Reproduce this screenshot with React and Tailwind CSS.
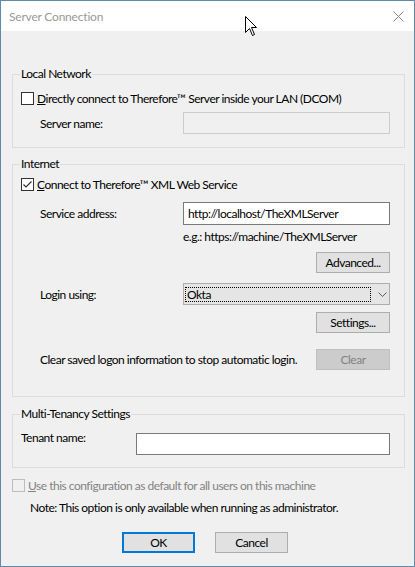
import React from 'react';

const font = { fontFamily: 'Lato, "Liberation Sans", Arial, sans-serif' };

function CheckBox({ checked, disabled }) {
  return (
    <span
      className={`flex h-[13px] w-[13px] shrink-0 items-center justify-center border ${
        disabled ? 'border-[#bcbcbc] bg-[#f0f0f0]' : 'border-[#333333] bg-white'
      }`}
    >
      {checked && (
        <svg width="11" height="11" viewBox="0 0 11 11">
          <polyline points="1.5,5.5 4,8 9.5,2.5" fill="none" stroke="#333333" strokeWidth="1.2" />
        </svg>
      )}
    </span>
  );
}

function Button({ children, disabled, className = '' }) {
  return (
    <div
      className={`flex h-[21px] w-[74px] items-center justify-center border ${
        disabled
          ? 'border-[#bfbfbf] bg-[#cccccc] text-[#838383]'
          : 'border-[#adadad] bg-[#e1e1e1] text-black'
      } ${className}`}
    >
      {children}
    </div>
  );
}

function GroupBox({ title, className = '', children }) {
  return (
    <fieldset className={`ml-[11px] w-[393px] border border-[#dcdcdc] ${className}`}>
      <legend className="ml-[7px] px-[1px] text-[12px] leading-[14px]">{title}</legend>
      {children}
    </fieldset>
  );
}

export default function App() {
  return (
    <div
      className="relative flex h-[567px] w-[415px] flex-col border border-[#6089a8] text-[12px] leading-[15px] tracking-[-0.5px] text-black"
      style={font}
    >
      {/* title bar */}
      <div className="flex h-[30px] items-center justify-between bg-white pl-[8px] pr-[10px]">
        <span className="text-[12px] tracking-[-0.2px] text-[#999999]">Server Connection</span>
        <svg width="11" height="11" viewBox="0 0 11 11">
          <path d="M0.5 0.5 L10.5 10.5 M10.5 0.5 L0.5 10.5" stroke="#8a8a8a" strokeWidth="1" />
        </svg>
      </div>

      <div className="flex flex-1 flex-col whitespace-nowrap bg-[#f0f0f0]">
        <GroupBox title="Local Network" className="mt-[36px] pb-[13px]">
          <div className="mt-[11px] flex h-[13px] items-center pl-[8px]">
            <CheckBox />
            <span className="ml-[3px]">
              <span className="underline">D</span>irectly connect to Therefore™ Server inside your LAN (DCOM)
            </span>
          </div>
          <div className="mt-[7px] flex items-center pl-[27px] pr-[14px]">
            <span className="w-[143px]">Server name:</span>
            <div className="h-[22px] w-[207px] border border-[#cccccc] bg-[#f0f0f0]" />
          </div>
        </GroupBox>

        <GroupBox title="Internet" className="mt-[9px] pb-[26px]">
          <div className="mt-[7px] flex h-[13px] items-center pl-[8px]">
            <CheckBox checked />
            <span className="ml-[3px]">
              <span className="underline">C</span>onnect to Therefore™ XML Web Service
            </span>
          </div>
          <div className="mt-[11px] flex items-center pl-[27px] pr-[14px]">
            <span className="w-[143px]">Service address:</span>
            <div className="flex h-[23px] w-[207px] items-center border border-[#7a7a7a] bg-white pl-[4px]">
              http://localhost/TheXMLServer
            </div>
          </div>
          <div className="mt-[4px] pl-[170px]">e.g.: https://machine/TheXMLServer</div>
          <div className="mt-[8px] flex justify-end pr-[14px]">
            <Button>Advanced...</Button>
          </div>
          <div className="mt-[10px] flex items-center pl-[27px] pr-[14px]">
            <span className="w-[143px]">Login using:</span>
            <div className="flex h-[22px] w-[207px] items-center border border-[#adadad] bg-[#e5e5e5] pl-[1px]">
              <div className="flex h-[15px] w-[186px] items-center border border-dotted border-black pl-[1px]">
                Okta
              </div>
              <svg className="ml-[7px]" width="9" height="5" viewBox="0 0 9 5">
                <polyline points="0.5,0.5 4.5,4.5 8.5,0.5" fill="none" stroke="#5d5d5d" strokeWidth="1" />
              </svg>
            </div>
          </div>
          <div className="mt-[7px] flex justify-end pr-[14px]">
            <Button>Settings...</Button>
          </div>
          <div className="mt-[16px] flex items-center justify-between pl-[27px] pr-[14px]">
            <span>Clear saved logon information to stop automatic login.</span>
            <Button disabled>Clear</Button>
          </div>
        </GroupBox>

        <GroupBox title="Multi-Tenancy Settings" className="mt-[10px] pb-[12px]">
          <div className="mt-[12px] flex items-start pl-[8px] pr-[14px]">
            <span className="-mt-[3px] w-[115px]">Tenant name:</span>
            <div className="h-[22px] w-[254px] border border-[#7a7a7a] bg-white" />
          </div>
        </GroupBox>

        <div className="ml-[11px] mt-[11px] flex h-[13px] items-center">
          <CheckBox disabled />
          <span className="ml-[3px] text-[#838383]">
            <span className="underline">U</span>se this configuration as default for all users on this machine
          </span>
        </div>
        <div className="ml-[29px] mt-[8px]">
          Note: This option is only available when running as administrator.
        </div>

        <div className="ml-[121px] mt-[17px] flex gap-[20px]">
          <div className="flex h-[21px] w-[73px] items-center justify-center border-2 border-[#0078d7] bg-[#e1e1e1]">
            OK
          </div>
          <div className="flex h-[21px] w-[73px] items-center justify-center border border-[#adadad] bg-[#e1e1e1]">
            Cancel
          </div>
        </div>
      </div>

      {/* mouse pointer over the title bar */}
      <svg className="absolute left-[244px] top-[15px]" width="13" height="21" viewBox="0 0 13 21">
        <path
          d="M0.5 0.5 L0.5 16.5 L4.5 12.5 L7.5 19.5 L9.5 18.5 L6.5 11.5 L11.5 11.5 Z"
          fill="white"
          stroke="black"
          strokeWidth="1"
          strokeLinejoin="miter"
        />
      </svg>
    </div>
  );
}
